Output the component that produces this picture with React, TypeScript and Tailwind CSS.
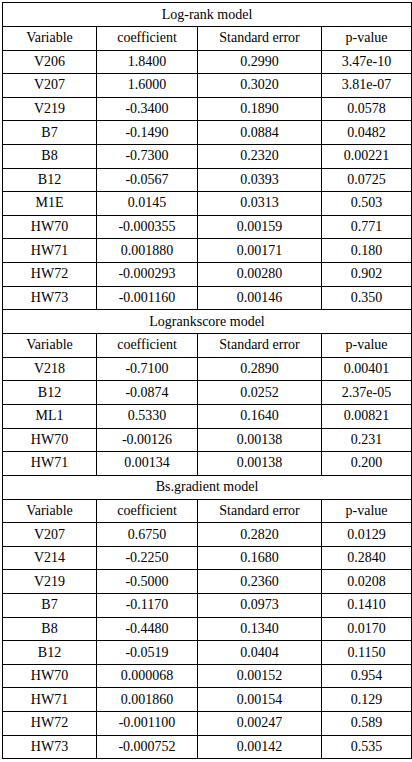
import { Fragment } from 'react';

type Row = [string, string, string, string];

const sections: { title: string; rows: Row[] }[] = [
  {
    title: 'Log-rank model',
    rows: [
      ['V206', '1.8400', '0.2990', '3.47e-10'],
      ['V207', '1.6000', '0.3020', '3.81e-07'],
      ['V219', '-0.3400', '0.1890', '0.0578'],
      ['B7', '-0.1490', '0.0884', '0.0482'],
      ['B8', '-0.7300', '0.2320', '0.00221'],
      ['B12', '-0.0567', '0.0393', '0.0725'],
      ['M1E', '0.0145', '0.0313', '0.503'],
      ['HW70', '-0.000355', '0.00159', '0.771'],
      ['HW71', '0.001880', '0.00171', '0.180'],
      ['HW72', '-0.000293', '0.00280', '0.902'],
      ['HW73', '-0.001160', '0.00146', '0.350'],
    ],
  },
  {
    title: 'Logrankscore model',
    rows: [
      ['V218', '-0.7100', '0.2890', '0.00401'],
      ['B12', '-0.0874', '0.0252', '2.37e-05'],
      ['ML1', '0.5330', '0.1640', '0.00821'],
      ['HW70', '-0.00126', '0.00138', '0.231'],
      ['HW71', '0.00134', '0.00138', '0.200'],
    ],
  },
  {
    title: 'Bs.gradient model',
    rows: [
      ['V207', '0.6750', '0.2820', '0.0129'],
      ['V214', '-0.2250', '0.1680', '0.2840'],
      ['V219', '-0.5000', '0.2360', '0.0208'],
      ['B7', '-0.1170', '0.0973', '0.1410'],
      ['B8', '-0.4480', '0.1340', '0.0170'],
      ['B12', '-0.0519', '0.0404', '0.1150'],
      ['HW70', '0.000068', '0.00152', '0.954'],
      ['HW71', '0.001860', '0.00154', '0.129'],
      ['HW72', '-0.001100', '0.00247', '0.589'],
      ['HW73', '-0.000752', '0.00142', '0.535'],
    ],
  },
];

const headers: Row = ['Variable', 'coefficient', 'Standard error', 'p-value'];

export default function App() {
  return (
    <div
      className="w-[412px] h-[762px] bg-white pl-[2px] pt-[2px] text-black"
      style={{ fontFamily: '"Liberation Serif", "Times New Roman", serif' }}
    >
      <table className="table-fixed border-collapse w-[409px] text-[14px] leading-none">
        <colgroup>
          <col className="w-[94px]" />
          <col className="w-[101px]" />
          <col className="w-[124px]" />
          <col className="w-[90px]" />
        </colgroup>
        <tbody>
          {sections.map((s) => (
            <Fragment key={s.title}>
              <tr className="h-[24px]">
                <td colSpan={4} className="border border-black text-center align-middle p-0">
                  {s.title}
                </td>
              </tr>
              <tr className="h-[23.6px]">
                {headers.map((h) => (
                  <td key={h} className="border border-black text-center align-middle p-0">
                    {h}
                  </td>
                ))}
              </tr>
              {s.rows.map((r, i) => (
                <tr key={i} className="h-[23.6px]">
                  {r.map((c, j) => (
                    <td key={j} className="border border-black text-center align-middle p-0">
                      {c}
                    </td>
                  ))}
                </tr>
              ))}
            </Fragment>
          ))}
        </tbody>
      </table>
    </div>
  );
}
